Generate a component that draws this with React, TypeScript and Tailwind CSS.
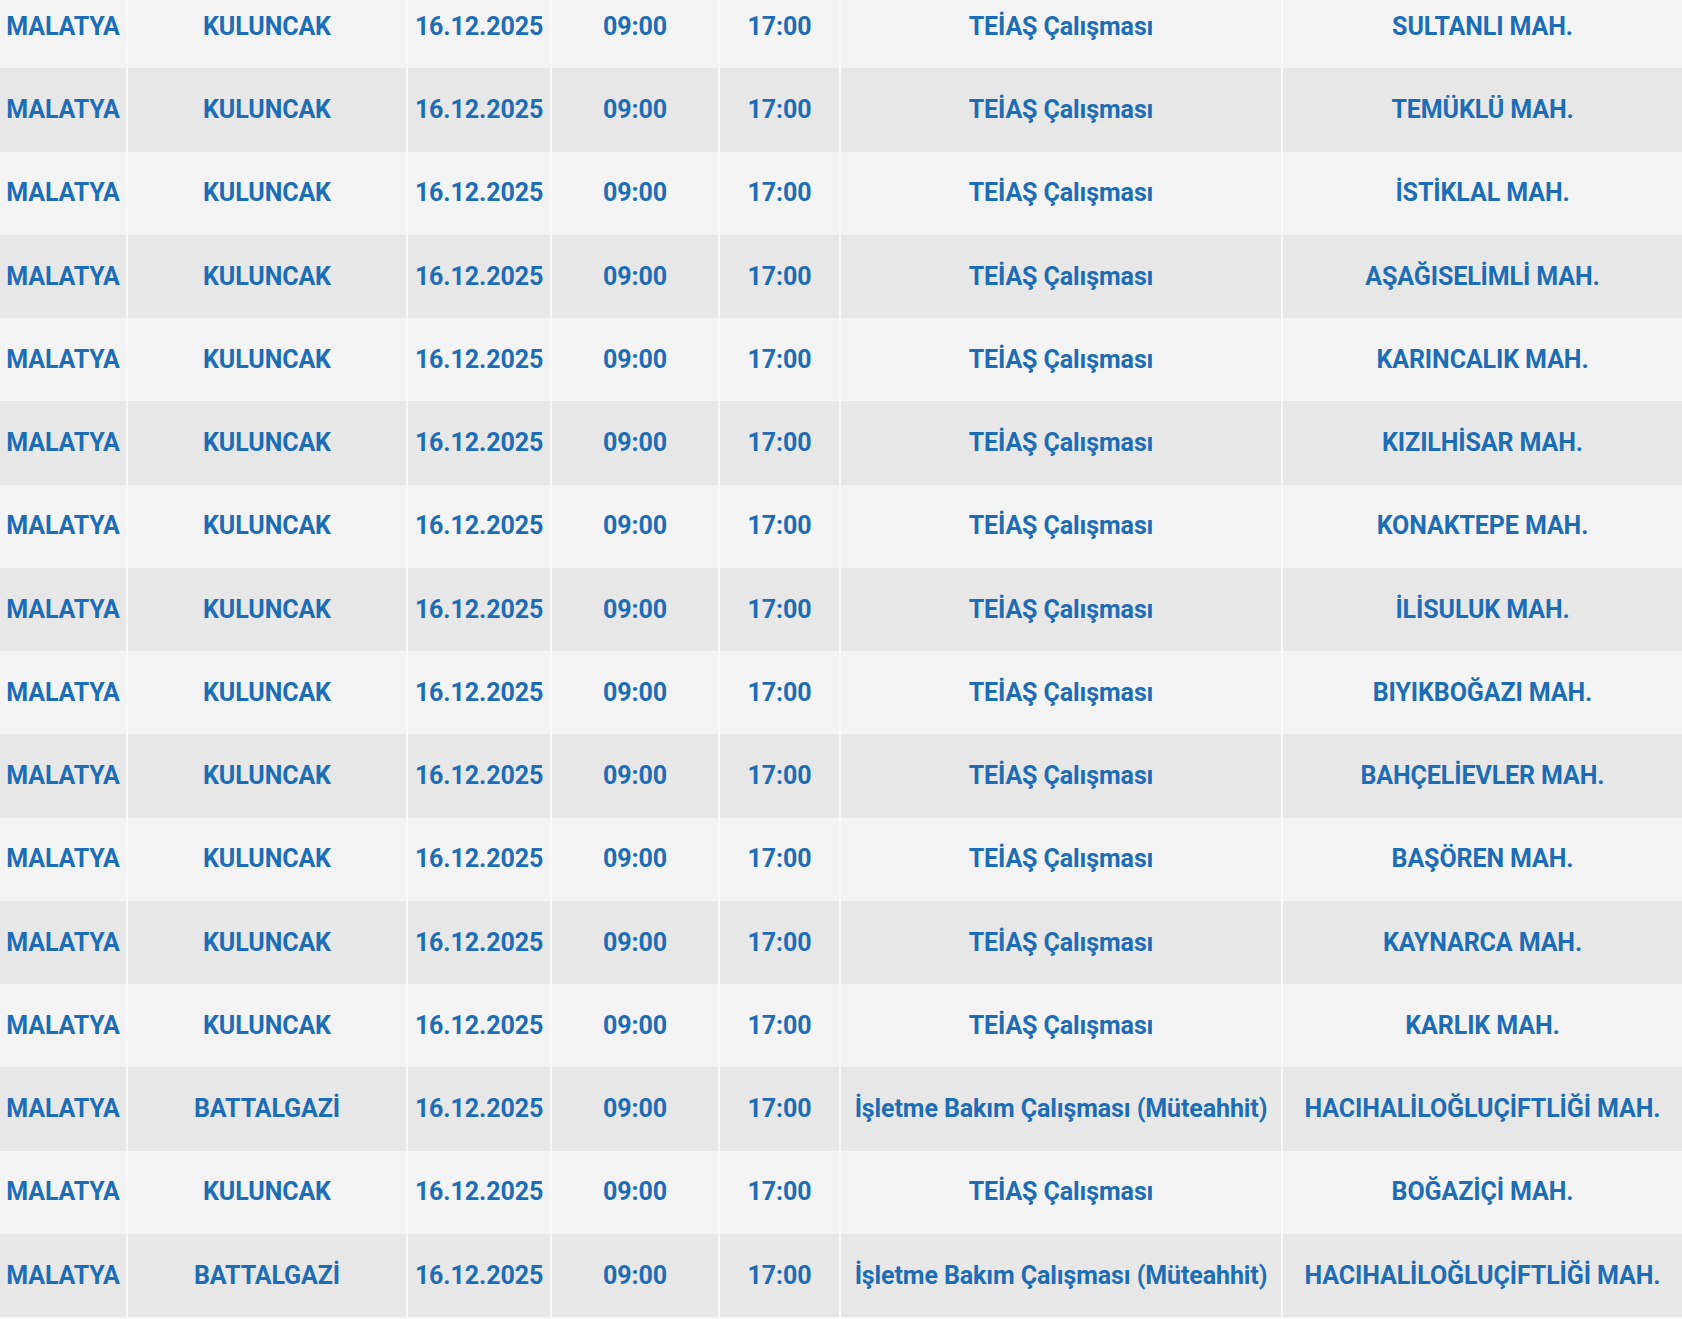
import React from 'react';

// One outage entry
type Outage = {
  city: string;
  district: string;
  date: string;
  start: string;
  end: string;
  reason: string;
  area: string;
};

const TEIAS = 'TEİAŞ Çalışması';
const BAKIM = 'İşletme Bakım Çalışması (Müteahhit)';

const row = (district: string, reason: string, area: string): Outage => ({
  city: 'MALATYA',
  district,
  date: '16.12.2025',
  start: '09:00',
  end: '17:00',
  reason,
  area,
});

const outages: Outage[] = [
  row('KULUNCAK', TEIAS, 'SULTANLI MAH.'),
  row('KULUNCAK', TEIAS, 'TEMÜKLÜ MAH.'),
  row('KULUNCAK', TEIAS, 'İSTİKLAL MAH.'),
  row('KULUNCAK', TEIAS, 'AŞAĞISELİMLİ MAH.'),
  row('KULUNCAK', TEIAS, 'KARINCALIK MAH.'),
  row('KULUNCAK', TEIAS, 'KIZILHİSAR MAH.'),
  row('KULUNCAK', TEIAS, 'KONAKTEPE MAH.'),
  row('KULUNCAK', TEIAS, 'İLİSULUK MAH.'),
  row('KULUNCAK', TEIAS, 'BIYIKBOĞAZI MAH.'),
  row('KULUNCAK', TEIAS, 'BAHÇELİEVLER MAH.'),
  row('KULUNCAK', TEIAS, 'BAŞÖREN MAH.'),
  row('KULUNCAK', TEIAS, 'KAYNARCA MAH.'),
  row('KULUNCAK', TEIAS, 'KARLIK MAH.'),
  row('BATTALGAZİ', BAKIM, 'HACIHALİLOĞLUÇİFTLİĞİ MAH.'),
  row('KULUNCAK', TEIAS, 'BOĞAZİÇİ MAH.'),
  row('BATTALGAZİ', BAKIM, 'HACIHALİLOĞLUÇİFTLİĞİ MAH.'),
];

const cell = 'h-[83.25px] p-0 text-center align-middle whitespace-nowrap';
const divider = 'border-l-2 border-[#f8f8f8]';

const App: React.FC = () => {
  return (
    <div
      className="h-screen overflow-hidden bg-[#f7f7f7]"
      style={{ fontFamily: 'Roboto, "Noto Sans", sans-serif' }}
    >
      <table className="-mt-[15px] w-[1682px] table-fixed border-collapse text-[25px] font-bold tracking-[-0.1px] text-[#1c6db6]">
        <colgroup>
          <col className="w-[127px]" />
          <col className="w-[280px]" />
          <col className="w-[144px]" />
          <col className="w-[168px]" />
          <col className="w-[121px]" />
          <col className="w-[442px]" />
          <col className="w-[400px]" />
        </colgroup>
        <tbody>
          {outages.map((o, i) => (
            <tr key={i} className="odd:bg-[#f3f3f3] even:bg-[#e7e7e7]">
              <td className={cell}>{o.city}</td>
              <td className={`${cell} ${divider}`}>{o.district}</td>
              <td className={`${cell} ${divider}`}>{o.date}</td>
              <td className={`${cell} ${divider}`}>{o.start}</td>
              <td className={`${cell} ${divider}`}>{o.end}</td>
              <td className={`${cell} ${divider}`}>{o.reason}</td>
              <td className={`${cell} ${divider}`}>{o.area}</td>
            </tr>
          ))}
        </tbody>
      </table>
    </div>
  );
};

export default App;
